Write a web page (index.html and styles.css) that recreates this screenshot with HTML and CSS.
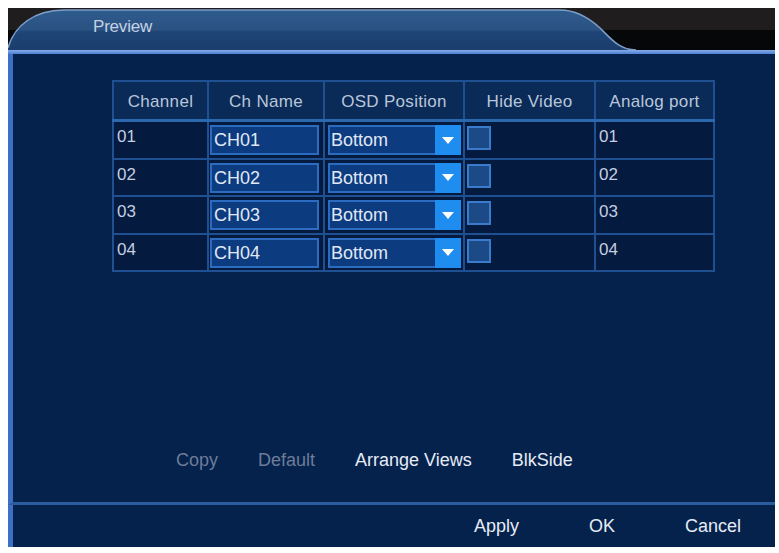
FILE: index.html
```html
<!DOCTYPE html>
<html>
<head>
<meta charset="utf-8">
<title>Preview</title>
<link rel="stylesheet" href="styles.css">
</head>
<body>
<div class="panel">
  <div class="header">
    <svg class="tab" width="767" height="42" viewBox="0 0 767 42">
      <defs>
        <linearGradient id="tabfill" x1="0" y1="0" x2="0" y2="1">
          <stop offset="0" stop-color="#2f5b8d"/>
          <stop offset="0.5" stop-color="#2a5283"/>
          <stop offset="0.54" stop-color="#1e4576"/>
          <stop offset="1" stop-color="#1a3d6d"/>
        </linearGradient>
      </defs>
      <path d="M0,42 L0,40 C6,18 26,2 56,2 L552,2 C568,2 580,9 592,20 C604,32 612,42 628,42 Z" fill="url(#tabfill)"/>
      <path d="M0,40 C6,18 26,2 56,2 L552,2 C568,2 580,9 592,20 C604,32 612,42 628,42" fill="none" stroke="#7e9fca" stroke-width="1.5"/>
    </svg>
    <span class="title">Preview</span>
  </div>
  <div class="rule"></div>
  <div class="main">
    <table class="grid">
      <colgroup>
        <col class="c1"><col class="c2"><col class="c3"><col class="c4"><col class="c5">
      </colgroup>
      <thead>
        <tr><th>Channel</th><th>Ch Name</th><th>OSD Position</th><th>Hide Video</th><th>Analog port</th></tr>
      </thead>
      <tbody>
        <tr>
          <td class="num">01</td>
          <td><div class="field">CH01</div></td>
          <td><div class="select"><span class="sel-text">Bottom</span><span class="sel-arrow"></span></div></td>
          <td><div class="check"></div></td>
          <td class="num">01</td>
        </tr>
        <tr>
          <td class="num">02</td>
          <td><div class="field">CH02</div></td>
          <td><div class="select"><span class="sel-text">Bottom</span><span class="sel-arrow"></span></div></td>
          <td><div class="check"></div></td>
          <td class="num">02</td>
        </tr>
        <tr>
          <td class="num">03</td>
          <td><div class="field">CH03</div></td>
          <td><div class="select"><span class="sel-text">Bottom</span><span class="sel-arrow"></span></div></td>
          <td><div class="check"></div></td>
          <td class="num">03</td>
        </tr>
        <tr>
          <td class="num">04</td>
          <td><div class="field">CH04</div></td>
          <td><div class="select"><span class="sel-text">Bottom</span><span class="sel-arrow"></span></div></td>
          <td><div class="check"></div></td>
          <td class="num">04</td>
        </tr>
      </tbody>
    </table>
    <div class="tools">
      <span class="btn disabled">Copy</span>
      <span class="btn disabled">Default</span>
      <span class="btn">Arrange Views</span>
      <span class="btn">BlkSide</span>
    </div>
  </div>
  <div class="footer">
    <span class="btn">Apply</span>
    <span class="btn">OK</span>
    <span class="btn">Cancel</span>
  </div>
</div>
</body>
</html>
```

FILE: styles.css
```css
html, body {
  margin: 0;
  padding: 0;
  background: #ffffff;
}

body {
  font-family: "Liberation Sans", Arial, sans-serif;
}

.panel {
  width: 767px;
  height: 539px;
  margin: 8px 0 0 8px;
  display: flex;
  flex-direction: column;
  background: #05224d;
}

.header {
  position: relative;
  height: 42px;
  flex: none;
  background: linear-gradient(#1f1d1d 0, #1f1d1d 22px, #060708 22px, #060708 100%);
}

.tab {
  position: absolute;
  left: 0;
  top: 0;
  display: block;
}

.title {
  position: relative;
  display: block;
  padding: 9px 0 0 85px;
  font-size: 17px;
  line-height: 20px;
  color: #c6d1e2;
  letter-spacing: -0.2px;
}

.rule {
  height: 4px;
  flex: none;
  background: linear-gradient(#86acea, #4d7ed2);
}

.main {
  flex: 1;
  display: flex;
  flex-direction: column;
  border-left: 5px solid #3f6fc4;
  border-bottom: 3px solid #2b5d9e;
  padding: 26px 0 0 99px;
}

.grid {
  border-collapse: collapse;
  table-layout: fixed;
  width: 601px;
  color: #c2cde0;
}

.grid .c1 { width: 95px; }
.grid .c2 { width: 116px; }
.grid .c3 { width: 140px; }
.grid .c4 { width: 131px; }
.grid .c5 { width: 119px; }

.grid th,
.grid td {
  border: 2px solid #1f5192;
  padding: 0;
}

.grid th {
  height: 34px;
  background: #0a2a57;
  font-weight: normal;
  font-size: 17px;
  letter-spacing: 0.3px;
  color: #b9c6da;
  padding-top: 3px;
  border-bottom: 3px solid #2c68ae;
}

.grid td {
  height: 32.5px;
  padding-top: 3px;
  background: #041a3f;
  vertical-align: top;
}

.grid td.num {
  font-size: 17px;
  line-height: 20px;
  padding-top: 5px;
  height: 30.5px;
  padding-left: 3px;
  color: #c4cee0;
}

.field {
  height: 26px;
  margin: 0 4px 0 1px;
  border: 2px solid #2b6cc0;
  background: #0c3b80;
  color: #e0e8f5;
  font-size: 18px;
  line-height: 26px;
  padding-left: 2px;
}

.select {
  display: flex;
  height: 30px;
  margin: 0 2px 0 3px;
}

.sel-text {
  flex: 1;
  border: 2px solid #2b6cc0;
  border-right: none;
  background: #0c3b80;
  color: #e0e8f5;
  font-size: 18px;
  line-height: 26px;
  padding-left: 1px;
}

.sel-arrow {
  width: 26px;
  background: #1f8cf0;
  display: flex;
  align-items: center;
  justify-content: center;
}

.sel-arrow::before {
  content: "";
  width: 0;
  height: 0;
  border-left: 6px solid transparent;
  border-right: 6px solid transparent;
  border-top: 7px solid #ffffff;
}

.check {
  width: 20px;
  height: 20px;
  margin: 1px 0 0 2px;
  border: 2px solid #3a7ccb;
  background: #1b4a86;
}

.tools {
  margin-top: auto;
  display: flex;
  gap: 40px;
  padding: 0 0 32px 64px;
  font-size: 18px;
  line-height: 20px;
}

.btn {
  color: #e6ecf6;
  font-size: 18px;
  line-height: 20px;
}

.btn.disabled {
  color: #6d7d98;
}

.footer {
  height: 42px;
  flex: none;
  display: flex;
  align-items: center;
  justify-content: flex-end;
  gap: 70px;
  padding-right: 34px;
  border-left: 5px solid #3f6fc4;
}
```
